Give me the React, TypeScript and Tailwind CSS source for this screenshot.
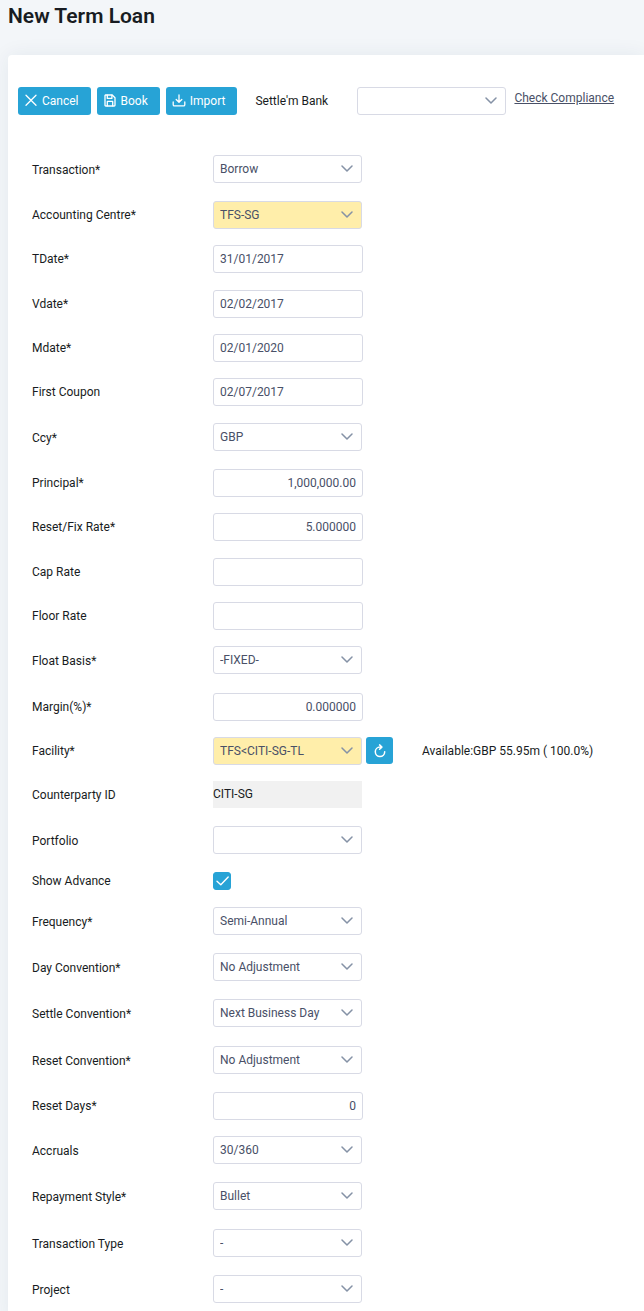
import React from 'react';
import { clsx } from 'clsx';

type Kind = 'select' | 'text' | 'number' | 'facility' | 'readonly' | 'check';

interface Field {
  id: string;
  label: string;
  kind: Kind;
  value?: string;
  // highlighted fields sit in the tighter rows
  highlight?: boolean;
}

const groups: Field[][] = [
  [
    { id: 'transaction', label: 'Transaction*', kind: 'select', value: 'Borrow' },
    { id: 'centre', label: 'Accounting Centre*', kind: 'select', value: 'TFS-SG', highlight: true },
    { id: 'tdate', label: 'TDate*', kind: 'text', value: '31/01/2017' },
  ],
  [
    { id: 'vdate', label: 'Vdate*', kind: 'text', value: '02/02/2017' },
    { id: 'mdate', label: 'Mdate*', kind: 'text', value: '02/01/2020' },
    { id: 'coupon', label: 'First Coupon', kind: 'text', value: '02/07/2017' },
  ],
  [
    { id: 'ccy', label: 'Ccy*', kind: 'select', value: 'GBP' },
    { id: 'principal', label: 'Principal*', kind: 'number', value: '1,000,000.00' },
    { id: 'rate', label: 'Reset/Fix Rate*', kind: 'number', value: '5.000000' },
  ],
  [
    { id: 'cap', label: 'Cap Rate', kind: 'number', value: '' },
    { id: 'floor', label: 'Floor Rate', kind: 'number', value: '' },
    { id: 'basis', label: 'Float Basis*', kind: 'select', value: '-FIXED-' },
  ],
  [
    { id: 'margin', label: 'Margin(%)*', kind: 'number', value: '0.000000' },
    { id: 'facility', label: 'Facility*', kind: 'facility', value: 'TFS<CITI-SG-TL', highlight: true },
    { id: 'counterparty', label: 'Counterparty ID', kind: 'readonly', value: 'CITI-SG' },
  ],
  [
    { id: 'portfolio', label: 'Portfolio', kind: 'select', value: '' },
    { id: 'advance', label: 'Show Advance', kind: 'check' },
    { id: 'frequency', label: 'Frequency*', kind: 'select', value: 'Semi-Annual' },
    { id: 'day', label: 'Day Convention*', kind: 'select', value: 'No Adjustment' },
    { id: 'settle', label: 'Settle Convention*', kind: 'select', value: 'Next Business Day' },
  ],
  [
    { id: 'reset', label: 'Reset Convention*', kind: 'select', value: 'No Adjustment' },
    { id: 'resetdays', label: 'Reset Days*', kind: 'number', value: '0' },
    { id: 'accruals', label: 'Accruals', kind: 'select', value: '30/360' },
    { id: 'repayment', label: 'Repayment Style*', kind: 'select', value: 'Bullet' },
  ],
  [
    { id: 'type', label: 'Transaction Type', kind: 'select', value: '-' },
    { id: 'project', label: 'Project', kind: 'select', value: '-' },
  ],
];

const Icon: React.FC<{ className: string; children: React.ReactNode }> = ({ className, children }) => (
  <svg
    viewBox="0 0 14 14"
    fill="none"
    stroke="currentColor"
    strokeWidth="1.3"
    strokeLinecap="round"
    strokeLinejoin="round"
    className={clsx('shrink-0', className)}
    aria-hidden="true"
  >
    {children}
  </svg>
);

const CloseIcon = () => (
  <Icon className="size-3.5">
    <path d="M2 1.2l10 10M12 1.2L2 11.2" />
  </Icon>
);

const SaveIcon = () => (
  <Icon className="size-3.5">
    <path d="M2.4 1h6.8L12 3.8v7.4a.8.8 0 0 1-.8.8H2.8a.8.8 0 0 1-.8-.8V1.4z" />
    <path d="M4.3 1.2v3.2h4.6V1.2M4.3 11.8V7.4h5.4v4.4" />
  </Icon>
);

const ImportIcon = () => (
  <Icon className="size-3.5">
    <path d="M7 .9v7.2M4.2 5.5L7 8.3l2.8-2.8M1.2 8v2.7c0 .7.5 1.2 1.2 1.2h9.2c.7 0 1.2-.5 1.2-1.2V8" />
  </Icon>
);

const RefreshIcon = () => (
  <Icon className="size-3.5">
    <path d="M7.6 3.1H7a4.7 4.7 0 1 0 4.7 4.7M6.6.9l2.3 2.2-2.3 2.2" strokeWidth="1.5" />
  </Icon>
);

interface SelectProps {
  id: string;
  value?: string;
  highlight?: boolean;
}

const Select: React.FC<SelectProps> = ({ id, value = '', highlight }) => (
  <div className="relative w-[149px] shrink-0">
    <select
      id={id}
      defaultValue={value}
      className={clsx(
        'block h-7 w-full appearance-none rounded-[3px] border border-[#d8dae5] pr-7 pl-1.5 text-[#495067] outline-none',
        highlight ? 'bg-[#ffeeaa]' : 'bg-white'
      )}
    >
      <option value={value}>{value}</option>
    </select>
    <svg
      viewBox="0 0 12 7"
      fill="none"
      stroke="#8592a6"
      strokeWidth="1.5"
      strokeLinecap="round"
      strokeLinejoin="round"
      className="pointer-events-none absolute top-2.5 right-[9px] h-[7px] w-3"
      aria-hidden="true"
    >
      <path d="M1 1l5 5 5-5" />
    </svg>
  </div>
);

const Control: React.FC<{ field: Field }> = ({ field }) => {
  const { id, kind, value, highlight } = field;

  switch (kind) {
    case 'select':
      return <Select id={id} value={value} highlight={highlight} />;
    case 'facility':
      return (
        <>
          <Select id={id} value={value} highlight={highlight} />
          <button
            type="button"
            aria-label="Refresh facility"
            className="ml-1 flex size-[27px] shrink-0 items-center justify-center self-start rounded-[3px] bg-[#27a3d6] text-white"
          >
            <RefreshIcon />
          </button>
          <span className="ml-[29px] whitespace-nowrap">Available:GBP 55.95m ( 100.0%)</span>
        </>
      );
    case 'readonly':
      return (
        <output id={id} className="h-[27px] w-[149px] self-start bg-[#f1f1f1] leading-[27px]">
          {value}
        </output>
      );
    case 'check':
      return (
        <span className="relative size-[18px]">
          <input
            id={id}
            type="checkbox"
            defaultChecked
            className="peer block size-[18px] appearance-none rounded-[3px] border border-[#27a3d6] checked:bg-[#27a3d6]"
          />
          <svg
            viewBox="0 0 18 18"
            fill="none"
            stroke="white"
            strokeWidth="1.4"
            strokeLinecap="round"
            strokeLinejoin="round"
            className="pointer-events-none absolute inset-0 hidden size-[18px] peer-checked:block"
            aria-hidden="true"
          >
            <path d="M4 9.3l3.8 3.4L15.2 5" />
          </svg>
        </span>
      );
    default:
      return (
        <input
          id={id}
          type="text"
          defaultValue={value}
          className={clsx(
            'h-7 w-[150px] rounded-[3px] border border-[#d8dae5] bg-white px-1.5 text-[#495067] outline-none',
            kind === 'number' && 'text-right'
          )}
        />
      );
  }
};

const Row: React.FC<{ field: Field }> = ({ field }) => {
  const roomy = field.kind === 'select' && !field.highlight;
  return (
    <div
      className={clsx(
        'flex items-center',
        field.kind === 'check' ? 'mb-[17px] h-[18px]' : 'h-7',
        field.kind !== 'check' && (roomy ? 'mb-[18px]' : 'mb-4')
      )}
    >
      <label htmlFor={field.id} className={clsx('w-[181px] shrink-0', roomy && 'pt-0.5')}>
        {field.label}
      </label>
      <Control field={field} />
    </div>
  );
};

const buttonClass = 'flex h-7 items-center gap-1 rounded-[3px] bg-[#27a3d6] pr-3 pl-1.5 text-white';

export default function App() {
  return (
    <div className="min-h-screen overflow-hidden bg-[#f3f6f9] pl-2 font-['Roboto',sans-serif] text-xs text-[#181c22]">
      <h1 className="mb-[23px] text-[21px] leading-8 font-semibold">New Term Loan</h1>

      <form className="rounded-tl-[4px] bg-white px-2.5 pt-8 shadow-[0_0_20px_rgba(30,60,90,0.07)]">
        <div className="flex items-center">
          <div className="flex gap-1.5">
            <button type="button" className={buttonClass}>
              <CloseIcon />
              Cancel
            </button>
            <button type="button" className={buttonClass}>
              <SaveIcon />
              Book
            </button>
            <button type="button" className={buttonClass}>
              <ImportIcon />
              Import
            </button>
          </div>
          <label htmlFor="bank" className="ml-[18px] w-[102px] shrink-0">
            Settle'm Bank
          </label>
          <Select id="bank" />
          <a href="#compliance" className="mb-1.5 ml-2 whitespace-nowrap text-[#495067] underline">
            Check Compliance
          </a>
        </div>

        <div className="-mb-2.5 flex flex-col gap-px pt-10 pl-3.5">
          {groups.map((group) => (
            <div key={group[0].id} className="flow-root">
              {group.map((field) => (
                <Row key={field.id} field={field} />
              ))}
            </div>
          ))}
        </div>
      </form>
    </div>
  );
}
